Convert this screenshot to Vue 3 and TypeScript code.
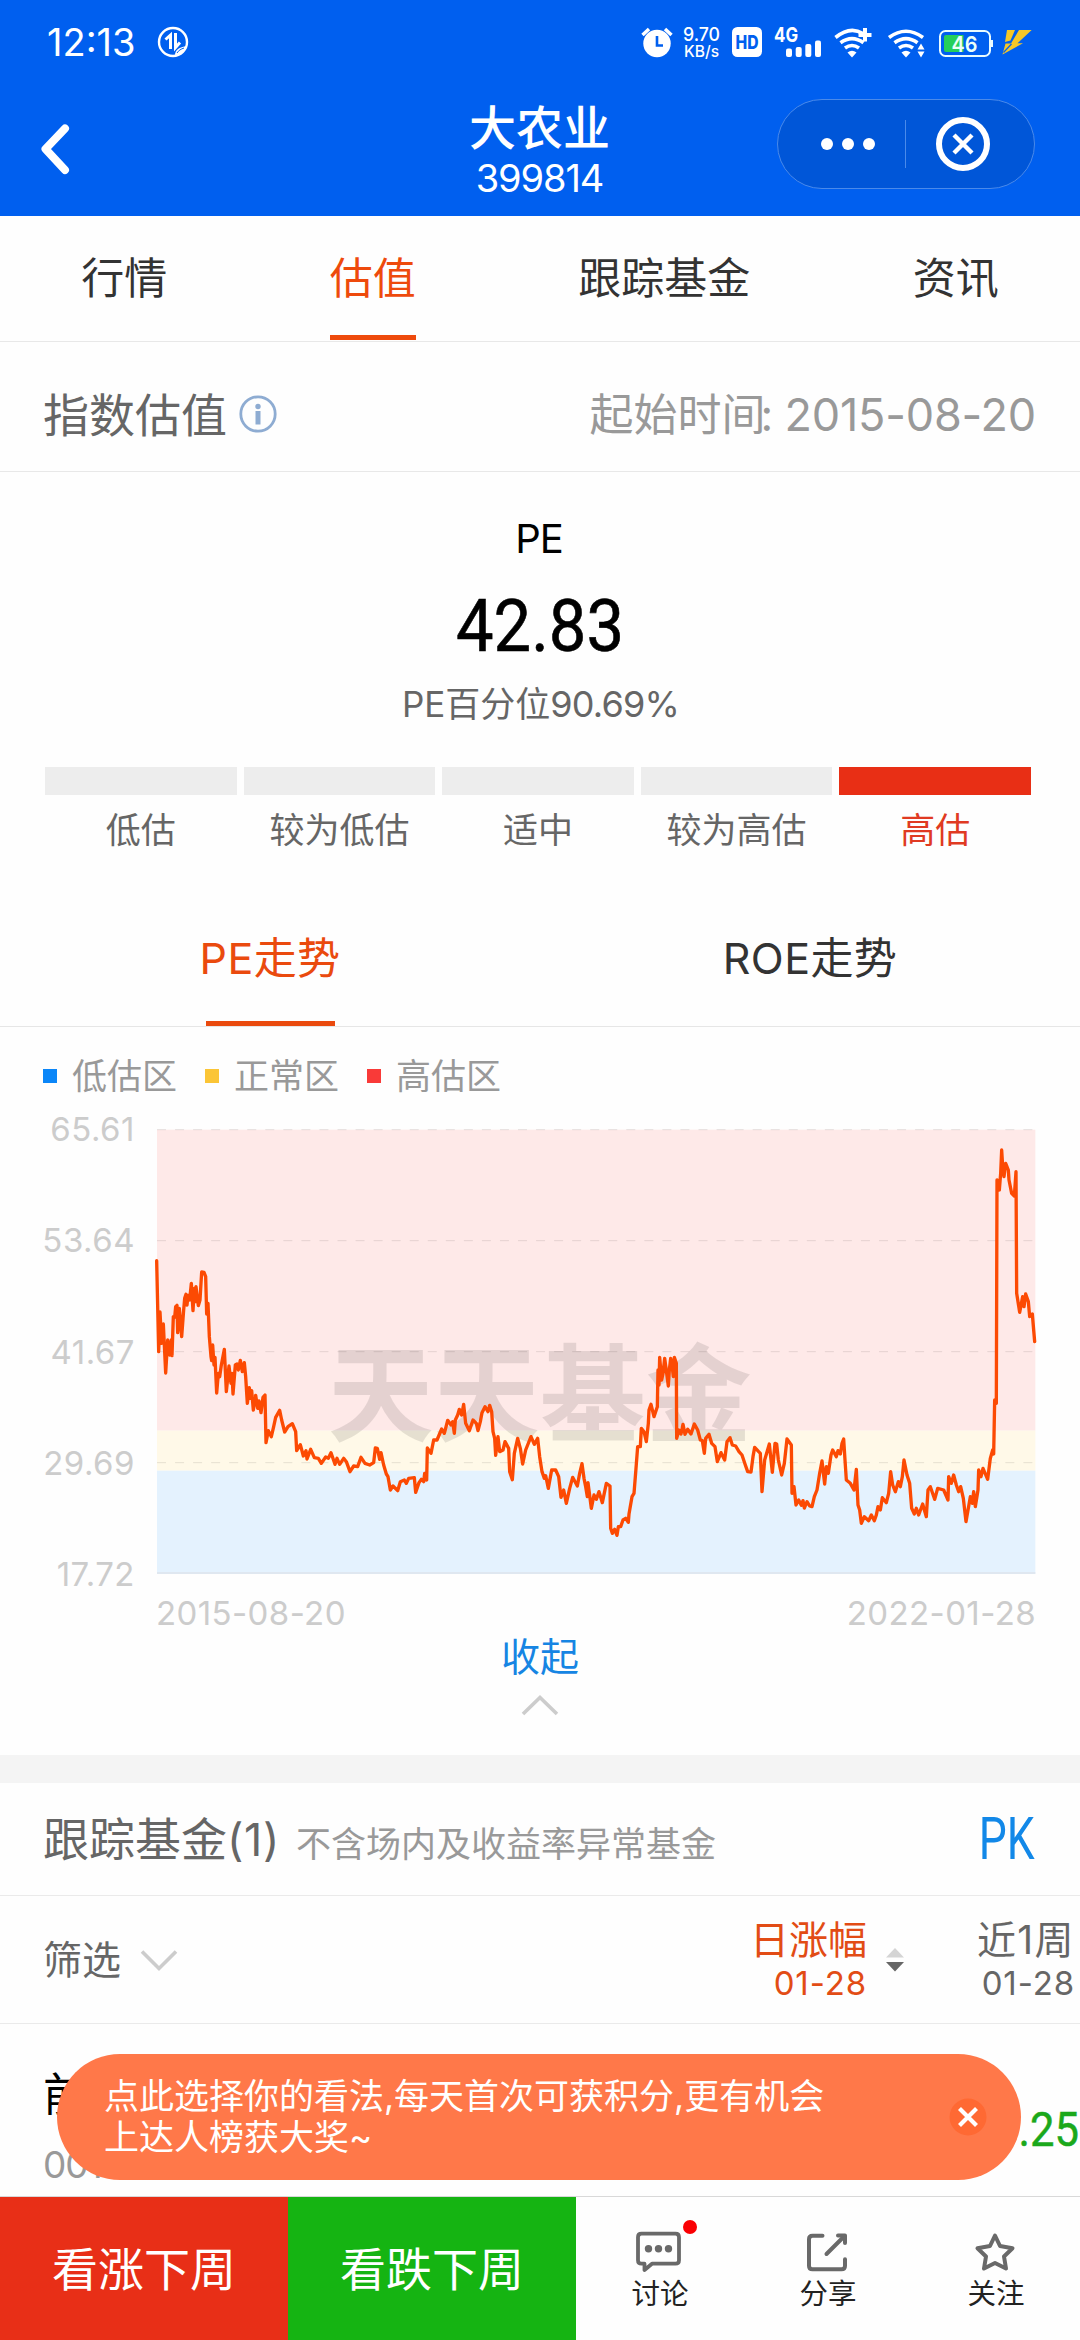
<script setup lang="ts">
interface Tab {
  label: string
  active: boolean
}

const mainTabs: Tab[] = [
  { label: '行情', active: false },
  { label: '估值', active: true },
  { label: '跟踪基金', active: false },
  { label: '资讯', active: false },
]

const levels: Tab[] = [
  { label: '低估', active: false },
  { label: '较为低估', active: false },
  { label: '适中', active: false },
  { label: '较为高估', active: false },
  { label: '高估', active: true },
]

const trendTabs: Tab[] = [
  { label: 'PE走势', active: true },
  { label: 'ROE走势', active: false },
]

const legend = [
  { label: '低估区', tone: 'low' },
  { label: '正常区', tone: 'mid' },
  { label: '高估区', tone: 'high' },
]

const yTicks: string[] = ['65.61', '53.64', '41.67', '29.69', '17.72']
const gridLines: number[] = [59, 392, 725, 1058]

// PE series in chart units, one string per stretch of the timeline
const series: { offset: number; points: string }[] = [
  {
    offset: 0,
    points:
      '49,452 55,725 59,606 64,700 69,642 76,789 82,690 88,735 93,690 95,737 99,620 103,622 106,590 110,586 112,668 117,595 124,680 130,600 133,565 137,553 140,585 143,556 148,570 153,520 158,602 162,535 165,575 167,530 174,587 179,570 184,486 191,487 196,500 199,612 203,580 207,680 212,740 214,752 217,705 221,765 224,742 229,849 234,790 238,800 243,765 252,718 258,845 266,768 272,820 275,790 278,852 285,765 290,762 294,780 300,751 306,785 312,758 316,800 321,880 327,833 331,865 334,842 339,900 346,856 352,895 356,873 362,908 368,862 374,855 377,998 384,962 393,980 400,950 406,922 418,901 424,930 433,966 443,950 456,941 466,965 469,1022 480,1004 489,1038 497,1022 500,1047 511,1018 522,1043 534,1045 543,1060 556,1041 564,1045 572,1028 584,1063 590,1045 598,1063 610,1045 618,1055 629,1085 640,1068 652,1070 662,1042 674,1060 688,1065 700,1058 705,1014 711,1015 718,1048 722,1028 730,1065 738,1092 743,1100 750,1140 758,1128 772,1142 780,1115 792,1110 798,1120 805,1105 822,1103 826,1147 836,1118 843,1108 850,1115 853,1090 859,1110 861,1014 872,1030 880,990 890,990 904,957 912,970 922,931 932,945 937,935 942,970',
  },
  {
    offset: 900,
    points:
      '45,930 52,915 57,898 64,915 70,883 76,940 87,962 98,930 108,940 113,962 120,935 125,908 134,890 143,905 148,886 154,905 158,965 163,985 166,1036 173,980 178,1025 188,1020 194,995 205,1015 208,1085 216,1109 222,1030 232,985 240,1015 247,1062 256,1020 272,980 282,1003 292,985 298,1040 305,1085 312,1105 316,1097 324,1135 334,1080 346,1080 355,1100 362,1162 370,1140 378,1180 388,1135 397,1102 411,1128 418,1090 425,1061 431,1105 436,1130 441,1160 443,1118 453,1195 461,1155 468,1168 476,1145 486,1178 498,1120 509,1128 511,1255 516,1270 523,1258 530,1276 534,1250 541,1250 548,1230 556,1225 564,1237 566,1212 575,1160 581,1150 587,1075 592,1010 600,1010 603,955 611,965 618,995 624,940 626,900 632,883 641,920 651,890 653,780 656,825 658,742 664,810 668,790 673,745 679,790 684,828 687,780 691,745 695,765 699,800 702,742 708,760 709,985 716,960 722,972 728,943 734,973 742,958 752,972 762,942 772,960 780,990 786,992 792,1030 796,985 806,973 814,1000 824,1010 831,1055 842,1028 853,1050 860,995 869,983 876,1005 886,1008 896,1025 905,1035 915,1065 922,1085 932,1086',
  },
  {
    offset: 1800,
    points:
      '38,1040 43,1012 55,1025 60,1030 65,1145 73,1050 87,1002 96,1087 104,1000 109,1002 114,1050 124,1095 132,1060 140,987 153,1005 155,1150 161,1130 167,1185 175,1170 183,1186 188,1172 192,1194 200,1175 208,1188 215,1190 222,1160 230,1140 238,1090 245,1053 253,1122 258,1070 264,1090 272,1035 277,1020 288,1040 293,1022 300,1032 305,1000 310,987 314,1050 318,1110 330,1120 341,1140 348,1078 353,1185 358,1200 363,1240 372,1220 385,1232 393,1215 402,1232 408,1215 413,1190 420,1200 426,1163 438,1178 445,1150 451,1085 457,1125 465,1145 474,1115 480,1130 486,1100 491,1050 500,1095 508,1120 514,1195 522,1212 528,1195 535,1215 547,1182 558,1220 563,1140 570,1130 583,1168 592,1135 610,1140 623,1170 625,1100 633,1120 640,1095 648,1125 655,1145 661,1130 669,1165 677,1235 690,1160 696,1180 700,1145 705,1190 713,1140 715,1080 722,1100 728,1075 742,1108 750,1045 757,1020 760,1032 763,870 768,880 770,210 777,240 781,190 784,120 788,185 791,200 796,160 804,180 806,210 814,250 822,258 827,185 829,550 838,607 847,560 851,590 856,552 864,575 868,620 876,612 880,660 883,695',
  },
]

const linePoints: string = series
  .flatMap(({ offset, points }) =>
    points.split(' ').map((pair) => {
      const [x, y] = pair.split(',').map(Number)
      return `${x + offset},${y}`
    }),
  )
  .join(' ')
</script>

<template>
  <div class="page">
    <header class="header">
      <div class="status">
        <span class="clock">12:13</span>
        <svg class="data-icon" width="32" height="32" viewBox="0 0 32 32">
          <circle cx="16" cy="16" r="14" fill="none" stroke="#fff" stroke-width="2.4" />
          <path d="M13.500 23V9L8.500 13.500" fill="none" stroke="#fff" stroke-width="3" />
          <path d="M18.500 7v14.500l4.500-5" fill="none" stroke="#fff" stroke-width="3" />
          <path d="M18 29c0-5 4-8 12-9-1 5-6 9-12 9z" fill="#fff" />
          <path d="M20 27c1.500-2.500 4-4 7-5" fill="none" stroke="#005fef" stroke-width="1" />
        </svg>
        <svg class="status-right" width="400" height="40" viewBox="640 22 400 40">
          <g fill="#fff">
            <circle cx="657" cy="43.500" r="13.700" />
            <path d="M642.500 35l6.500-6M671.500 35l-6.500-6" stroke="#fff" stroke-width="3.500" />
            <path d="M657 36v9.500h6" fill="none" stroke="#005fef" stroke-width="2.600" />
            <text x="683" y="41" font-size="19" font-weight="500" textLength="37" lengthAdjust="spacingAndGlyphs">9.70</text>
            <text x="684" y="57" font-size="16" font-weight="500" textLength="35" lengthAdjust="spacingAndGlyphs">KB/s</text>
            <rect x="732" y="27" width="30" height="30" rx="5.500" />
            <text x="735.500" y="48.700" font-size="18.500" font-weight="800" fill="#005fef" textLength="23" lengthAdjust="spacingAndGlyphs">HD</text>
            <text x="774" y="42" font-size="20.500" font-weight="700" textLength="24" lengthAdjust="spacingAndGlyphs">4G</text>
            <rect x="786" y="48.500" width="6" height="8.500" rx="2" />
            <rect x="795.700" y="47" width="6" height="10" rx="2" />
            <rect x="805.300" y="44" width="6" height="13" rx="2" />
            <rect x="815" y="40.500" width="6" height="16.500" rx="2" />
          </g>
          <g fill="none" stroke="#fff" stroke-width="3.600">
            <path d="M835.500 37.500Q850 25.500 863 33.500" />
            <path d="M840.500 42.800Q852 34.500 863.500 42.800" />
            <path d="M845 48Q852 43 859 48" />
            <path d="M865 28v13.500M858.500 35h13" stroke-width="4" />
            <path d="M889 37.500Q906 25 923 37.500" />
            <path d="M894.500 42.800Q906 34.500 917.500 42.800" />
            <path d="M899 48Q906 43 913 48" />
          </g>
          <g fill="#fff">
            <path d="M847.500 52.500q4.500-3.500 9 0L852 57.500z" />
            <path d="M901.500 52.500q4.500-3.500 9 0L906 57.500z" />
            <path d="M917.500 49.500l3.500-6 3.500 6zM917.500 51.500l3.500 6 3.500-6z" />
          </g>
          <rect x="940" y="31" width="50" height="25" rx="5.500" fill="none" stroke="#e9fbff" stroke-width="2" />
          <path d="M992 40v7" stroke="#e9fbff" stroke-width="2" />
          <path d="M946 35h17.500v17H946q-2 0-2-2V37q0-2 2-2z" fill="#25cf5a" />
          <text x="951.500" y="51.800" font-size="22" font-weight="600" fill="#eafff8" textLength="26" lengthAdjust="spacingAndGlyphs">46</text>
          <g fill="#f5c828">
            <path d="M1007 30h8l-4.500 10.500-5.500 1.500z" />
            <path d="M1019 30h12.700L1017.500 43.300h5.500L1002.500 54.500 1005.500 43.500h5.500z" />
          </g>
          <path d="M1003.500 52.500l8-8.500" stroke="#005fef" stroke-width="1.200" />
        </svg>
      </div>

      <div class="nav">
        <svg class="back" width="36" height="56" viewBox="0 0 36 56">
          <path d="M28 7.500L8.500 28 28 49" fill="none" stroke="#fff" stroke-width="8" stroke-linecap="round" stroke-linejoin="round" />
        </svg>
        <div class="title-box">
          <h1 class="title">大农业</h1>
          <p class="code">399814</p>
        </div>
        <div class="capsule">
          <svg width="256" height="88" viewBox="778 100 256 88">
            <circle cx="827" cy="144" r="6" fill="#fff" />
            <circle cx="848" cy="144" r="6" fill="#fff" />
            <circle cx="869" cy="144" r="6" fill="#fff" />
            <path d="M905.500 120v48" stroke="#4a8aea" stroke-width="1" />
            <circle cx="963" cy="144" r="24" fill="none" stroke="#fff" stroke-width="6" />
            <path d="M954 135l18 18M972 135l-18 18" stroke="#fff" stroke-width="4.400" />
          </svg>
        </div>
      </div>
    </header>

    <nav class="tabs">
      <div v-for="tab in mainTabs" :key="tab.label" class="tab" :class="{ active: tab.active }">{{ tab.label }}</div>
    </nav>

    <section class="section-head">
      <h2 class="section-title">指数估值</h2>
      <svg class="info" width="38" height="38" viewBox="0 0 38 38">
        <circle cx="19" cy="19" r="17.200" fill="none" stroke="#8eacd2" stroke-width="2.800" />
        <circle cx="19" cy="11.500" r="2.700" fill="#8eacd2" />
        <path d="M19 16v13.500" stroke="#8eacd2" stroke-width="5" />
      </svg>
      <span class="since">起始时间<span class="colon">:</span> <span class="since-date">2015-08-20</span></span>
    </section>

    <section class="summary">
      <div class="metric">PE</div>
      <div class="value">42.83</div>
      <div class="percentile">PE百分位<span class="pct">90.69%</span></div>
      <div class="levels">
        <div v-for="level in levels" :key="level.label" class="level" :class="{ active: level.active }">
          <div class="level-bar"></div>
          <div class="level-label">{{ level.label }}</div>
        </div>
      </div>
    </section>

    <nav class="trend-tabs">
      <div v-for="tab in trendTabs" :key="tab.label" class="trend-tab" :class="{ active: tab.active }">
        <span>{{ tab.label }}</span>
      </div>
    </nav>

    <section class="trend">
      <div class="legend">
        <div v-for="item in legend" :key="item.label" class="legend-item">
          <i class="swatch" :class="item.tone"></i>{{ item.label }}
        </div>
      </div>
      <div class="plot">
        <div class="y-axis">
          <span v-for="tick in yTicks" :key="tick">{{ tick }}</span>
        </div>
        <svg class="chart" width="879" height="446" viewBox="50 57 2637 1338">
          <rect x="50" y="59" width="2635" height="903" fill="#fee9e8" />
          <rect x="50" y="962" width="2635" height="120" fill="#fff9e8" />
          <rect x="50" y="1082" width="2635" height="309" fill="#e4f2fe" />
          <path
            v-for="y in gridLines"
            :key="y"
            :d="`M50 ${y}H2685`"
            stroke="#000"
            stroke-opacity="0.1"
            stroke-width="3"
            stroke-dasharray="27 27.150"
          />
          <path d="M50 1389H2685" stroke="#dfe7f0" stroke-width="6" />
          <text class="watermark" x="562" y="970">天天基金</text>
          <polyline :points="linePoints" fill="none" stroke="#fc4a03" stroke-width="10" stroke-linejoin="round" stroke-linecap="round" />
        </svg>
      </div>
      <div class="x-axis"><span>2015-08-20</span><span>2022-01-28</span></div>
      <div class="collapse">
        <span>收起</span>
        <svg width="40" height="24" viewBox="0 0 40 24">
          <path d="M3 21L20 4.500 37 21" fill="none" stroke="#ccc" stroke-width="3.600" />
        </svg>
      </div>
    </section>

    <div class="divider"></div>

    <section class="fund-head">
      <h2 class="section-title">跟踪基金<span class="count">(1)</span></h2>
      <span class="note">不含场内及收益率异常基金</span>
      <span class="pk">PK</span>
    </section>

    <section class="filter-row">
      <span class="filter">筛选</span>
      <svg class="chevron" width="38" height="24" viewBox="0 0 38 24">
        <path d="M2 2.500L19 19.500 36 2.500" fill="none" stroke="#ccc" stroke-width="3.600" />
      </svg>
      <div class="col day">
        <span class="col-name">日涨幅</span>
        <span class="col-date">01-28</span>
      </div>
      <svg class="sort" width="20" height="26" viewBox="0 0 20 26">
        <path d="M10 1l9 9.500H1z" fill="#d4d4d4" />
        <path d="M1 15h18l-9 9.500z" fill="#666" />
      </svg>
      <div class="col week">
        <span class="col-name">近1周</span>
        <span class="col-date">01-28</span>
      </div>
    </section>

    <section class="fund-row">
      <div class="fund">
        <span class="fund-name">前</span>
        <span class="fund-code">001</span>
      </div>
      <span class="change">.25</span>
      <div class="banner">
        <p class="banner-text">点此选择你的看法,每天首次可获积分,更有机会<br />上达人榜获大奖~</p>
        <svg width="38" height="38" viewBox="0 0 38 38">
          <circle cx="19" cy="19" r="18.500" fill="#ff6933" />
          <path d="M10.500 10.500l17 17M27.500 10.500l-17 17" stroke="#fff" stroke-width="4.200" />
        </svg>
      </div>
    </section>

    <footer class="footer">
      <div class="vote up">看涨下周</div>
      <div class="vote down">看跌下周</div>
      <div class="action">
        <svg width="64" height="54" viewBox="628 2218 64 54">
          <path
            d="M641.500 2233.700h34q3.500 0 3.500 3.500v23q0 3.500-3.500 3.500h-23.500l-7.500 6.300v-6.300h-3q-3.500 0-3.500-3.500v-23q0-3.500 3.500-3.500z"
            fill="none"
            stroke="#696969"
            stroke-width="3.800"
            stroke-linejoin="round"
          />
          <g fill="#696969">
            <circle cx="648.500" cy="2248.700" r="3.700" />
            <circle cx="658.500" cy="2248.700" r="3.700" />
            <circle cx="668.500" cy="2248.700" r="3.700" />
          </g>
        </svg>
        <i class="dot"></i>
        <span>讨论</span>
      </div>
      <div class="action">
        <svg width="64" height="54" viewBox="796 2218 64 54">
          <g fill="none" stroke="#696969" stroke-width="4" stroke-linecap="round" stroke-linejoin="round">
            <path d="M822.500 2235.700h-10q-3.500 0-3.500 3.500v26.500q0 3.500 3.500 3.500h29q3.500 0 3.500-3.500v-6.500" />
            <path d="M826.500 2254l16-16" />
            <path d="M838 2235.500h7v7.500" />
          </g>
        </svg>
        <span>分享</span>
      </div>
      <div class="action">
        <svg width="64" height="54" viewBox="964 2218 64 54">
          <path
            d="M995 2235.500l5 10.500 12.500 2.200-8.500 8.300 2 12-11-5.500-11 5.500 2-12-8.500-8.300 12.500-2.200z"
            fill="none"
            stroke="#696969"
            stroke-width="4"
            stroke-linejoin="round"
          />
        </svg>
        <span>关注</span>
      </div>
    </footer>
  </div>
</template>

<style>
body {
  margin: 0;
  background: #fefefe;
}
</style>

<style scoped>
.page {
  width: 1080px;
  height: 2340px;
  overflow: hidden;
  display: flex;
  flex-direction: column;
  background: #fefefe;
  color: #666;
  font-family: Inter, 'Noto Sans CJK SC', sans-serif;
}
.page * {
  box-sizing: border-box;
}
.page > * {
  flex-shrink: 0;
}
svg {
  display: block;
  flex-shrink: 0;
}
h1,
h2,
p {
  margin: 0;
  font-weight: 400;
}

/* header */
.header {
  height: 216px;
  background: #005fef;
  color: #fff;
}
.status {
  height: 84px;
  display: flex;
  align-items: center;
  padding: 0 40px 0 47px;
}
.clock {
  width: 110px;
  font-size: 38px;
  line-height: 40px;
  white-space: nowrap;
}
.data-icon {
  width: 32px;
}
.status-right {
  margin-left: auto;
}
.nav {
  height: 132px;
  display: flex;
  align-items: center;
  justify-content: space-between;
  padding: 0 45px 12px 37px;
}
.back {
  margin-top: 10px;
  margin-right: 229px;
}
.title-box {
  text-align: center;
}
.title {
  font-size: 47px;
  line-height: 56px;
  font-weight: 500;
  margin-top: 12px;
}
.code {
  font-size: 38px;
  line-height: 44px;
  letter-spacing: -1.1px;
}
.capsule {
  width: 258px;
  height: 90px;
  border: 1px solid #4a8aea;
  border-radius: 45px;
  background: #0056d8;
}

/* main tabs */
.tabs {
  height: 126px;
  display: flex;
  justify-content: space-around;
  border-bottom: 1px solid #e8e8e8;
}
.tab {
  height: 124px;
  font-size: 43px;
  line-height: 124px;
  color: #333;
}
.tab.active {
  color: #ee4a0c;
  background: linear-gradient(#ee4a0c, #ee4a0c) bottom / 100% 5px no-repeat;
}

/* section header */
.section-head {
  height: 130px;
  display: flex;
  align-items: center;
  padding: 16px 44px 0 43px;
  border-bottom: 1px solid #e8e8e8;
}
.section-title {
  font-size: 46px;
  line-height: 60px;
  color: #666;
}
.info {
  margin: 0 0 2px 12px;
}
.since {
  margin-left: auto;
  font-size: 44px;
  line-height: 60px;
  word-spacing: -1px;
  color: #999;
  white-space: nowrap;
}
.colon {
  margin-left: -5px;
}
.since-date {
  font-size: 45px;
  letter-spacing: -0.2px;
}

/* summary */
.summary {
  height: 428px;
  text-align: center;
  padding: 36px 49px 0 45px;
}
.metric {
  font-size: 40px;
  line-height: 62px;
  letter-spacing: -1px;
  padding-left: 2px;
  color: #000;
}
.value {
  font-family: Roboto, sans-serif;
  font-size: 72px;
  font-weight: 400;
  line-height: 112px;
  padding-top: 1px;
  margin-bottom: -1px;
  transform: translateX(2px) scaleX(0.93);
  color: #000;
  -webkit-text-stroke: 0.6px #000;
}
.percentile {
  font-size: 35px;
  line-height: 44px;
  padding-left: 5px;
}
.pct {
  font-size: 36px;
  letter-spacing: -0.8px;
}
.levels {
  display: flex;
  gap: 7px;
  margin-top: 41px;
}
.level {
  flex: 1;
  font-size: 35px;
}
.level-bar {
  height: 28px;
  background: #ededed;
}
.level-label {
  margin-top: 10px;
  line-height: 50px;
}
.level.active {
  color: #e03a22;
}
.level.active .level-bar {
  background: #e82f15;
}

/* trend tabs */
.trend-tabs {
  height: 127px;
  display: flex;
  border-bottom: 1px solid #e6e6e6;
}
.trend-tab {
  flex: 1;
  display: flex;
  justify-content: center;
  font-size: 43px;
  line-height: 116px;
  letter-spacing: 0.4px;
  color: #333;
}
.trend-tab.active {
  color: #ea4a0e;
  background: linear-gradient(#ea4a0e, #ea4a0e) bottom / 129px 5px no-repeat;
}

/* chart */
.trend {
  height: 728px;
}
.legend {
  display: flex;
  gap: 28px;
  padding: 24px 43px 0;
}
.legend-item {
  display: flex;
  align-items: center;
  font-size: 35px;
  line-height: 50px;
  color: #999;
}
.swatch {
  width: 14px;
  height: 14px;
  margin-right: 15px;
}
.swatch.low {
  background: #0b86f8;
}
.swatch.mid {
  background: #fbc536;
}
.swatch.high {
  background: #f93a38;
}
.plot {
  display: flex;
  margin-top: 28px;
}
.y-axis {
  width: 157px;
  height: 486px;
  margin: -20px 0 -20px;
  padding-right: 22px;
  display: flex;
  flex-direction: column;
  justify-content: space-between;
  text-align: right;
  font-size: 33px;
  line-height: 41px;
  letter-spacing: 0.5px;
  color: #ccc;
}
.chart {
  overflow: visible;
}
.watermark {
  font-family: 'Noto Sans CJK SC', sans-serif;
  font-size: 318px;
  font-weight: 700;
  fill: #000;
  fill-opacity: 0.1;
}
.x-axis {
  display: flex;
  justify-content: space-between;
  padding: 0 44px 0 156px;
  margin: 18px 0 1px;
  font-size: 33px;
  line-height: 40px;
  letter-spacing: 0.4px;
  color: #ccc;
}
.collapse {
  display: flex;
  flex-direction: column;
  align-items: center;
  font-size: 39px;
  line-height: 46px;
  color: #1685e3;
}
.collapse svg {
  margin-top: 13px;
}
.divider {
  height: 28px;
  background: #f4f4f4;
}

/* funds */
.fund-head {
  height: 113px;
  display: flex;
  align-items: center;
  padding: 0 46px 0 43px;
  border-bottom: 1px solid #eaeaea;
}
.count {
  letter-spacing: 0.6px;
  font-size: 45px;
}
.note {
  margin: 10px 0 0 16px;
  font-size: 35px;
  line-height: 50px;
  color: #999;
}
.pk {
  margin-left: auto;
  font-family: Roboto, sans-serif;
  font-size: 60px;
  line-height: 60px;
  transform: scaleX(0.74);
  transform-origin: right;
  color: #1288e8;
}
.filter-row {
  height: 128px;
  display: flex;
  align-items: center;
  padding-left: 43px;
  border-bottom: 1px solid #eaeaea;
}
.filter {
  font-size: 39px;
  line-height: 60px;
}
.chevron {
  margin: 2px 0 0 19px;
}
.col {
  display: flex;
  flex-direction: column;
  align-items: flex-end;
  white-space: nowrap;
}
.col-name {
  font-size: 39px;
  line-height: 46px;
}
.col-date {
  font-size: 33px;
  line-height: 40px;
  letter-spacing: 0.9px;
}
.day {
  width: 200px;
  margin-left: 489px;
  color: #e24c15;
}
.sort {
  margin-left: 18px;
}
.week {
  width: 170px;
}
.week .col-name {
  letter-spacing: 1.4px;
}
.fund-row {
  height: 172px;
  position: relative;
  display: flex;
  justify-content: space-between;
  padding: 0 1px 0 43px;
}
.fund {
  display: flex;
  flex-direction: column;
  padding-top: 40px;
}
.fund-name {
  font-size: 46px;
  line-height: 60px;
  color: #000;
}
.fund-code {
  margin-top: 20px;
  font-size: 37px;
  line-height: 42px;
  letter-spacing: -1px;
  color: #999;
}
.change {
  font-family: Roboto, sans-serif;
  font-size: 49px;
  font-weight: 400;
  line-height: 60px;
  margin-top: 76px;
  transform: scaleX(0.89);
  transform-origin: right;
  color: #1ba81b;
  -webkit-text-stroke: 0.5px #1ba81b;
}
.banner {
  position: absolute;
  left: 57px;
  top: 30px;
  width: 964px;
  height: 126px;
  border-radius: 63px;
  background: #ff7849;
  display: flex;
  align-items: center;
  justify-content: space-between;
  padding: 0 34px 0 47px;
  color: #fff;
}
.banner-text {
  font-size: 35px;
  line-height: 41px;
  white-space: nowrap;
}

/* footer */
.footer {
  height: 144px;
  display: flex;
  border-top: 1px solid #d8d8d8;
}
.vote {
  width: 288px;
  font-size: 46px;
  line-height: 144px;
  text-align: center;
  color: #fff;
}
.vote.up {
  background: #e82f17;
}
.vote.down {
  background: #15b412;
}
.action {
  flex: 1;
  position: relative;
  display: flex;
  flex-direction: column;
  align-items: center;
  padding-top: 21px;
  font-size: 28.500px;
  line-height: 44px;
  color: #222;
}
.dot {
  position: absolute;
  left: 107px;
  top: 23px;
  width: 14px;
  height: 14px;
  border-radius: 50%;
  background: #fa0003;
}
</style>
